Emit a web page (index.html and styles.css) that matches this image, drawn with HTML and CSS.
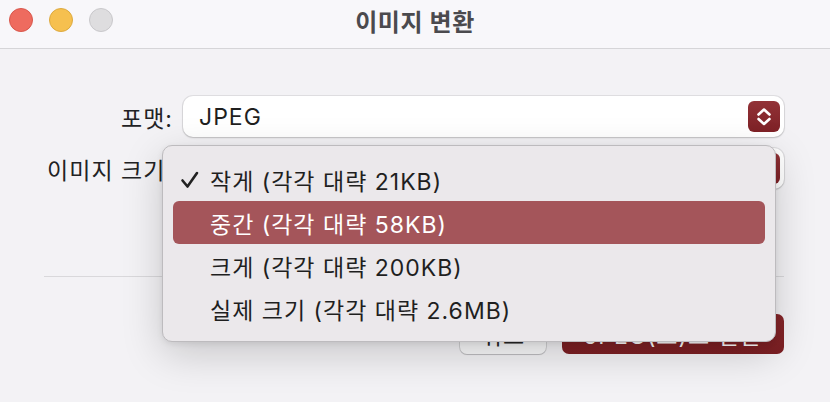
FILE: index.html
```html
<!DOCTYPE html>
<html lang="ko">
<head>
<meta charset="utf-8">
<title>이미지 변환</title>
<link rel="stylesheet" href="styles.css">
</head>
<body>
<div class="window">
  <header class="titlebar">
    <div class="lights">
      <span class="light red"></span>
      <span class="light yellow"></span>
      <span class="light gray"></span>
    </div>
    <h1 class="title">이미지 변환</h1>
  </header>
  <main class="content">
    <div class="form">
      <label class="label">포맷:</label>
      <div class="popup">
        <span class="popup-value">JPEG</span>
        <span class="stepper">
          <svg width="32" height="31" viewBox="0 0 32 31"><path d="M10.5 13.5 L16 8.5 L21.5 13.5" fill="none" stroke="#fff" stroke-width="2.6" stroke-linecap="round" stroke-linejoin="round"/><path d="M10.5 18 L16 23 L21.5 18" fill="none" stroke="#fff" stroke-width="2.6" stroke-linecap="round" stroke-linejoin="round"/></svg>
        </span>
      </div>
      <label class="label">이미지 크기:</label>
      <div class="popup">
        <span class="popup-value covered">중간 (각각 대략 58KB)</span>
        <span class="stepper">
          <svg width="32" height="31" viewBox="0 0 32 31"><path d="M10.5 13.5 L16 8.5 L21.5 13.5" fill="none" stroke="#fff" stroke-width="2.6" stroke-linecap="round" stroke-linejoin="round"/><path d="M10.5 18 L16 23 L21.5 18" fill="none" stroke="#fff" stroke-width="2.6" stroke-linecap="round" stroke-linejoin="round"/></svg>
        </span>
      </div>
    </div>
    <hr class="separator">
    <div class="actions">
      <button class="btn cancel">취소</button>
      <button class="btn primary">JPEG(으)로 변환</button>
    </div>
  </main>
  <ul class="menu">
    <li class="item"><svg class="check" width="20" height="20" viewBox="0 0 20 20"><path d="M2.5 10.5 L7.5 16.5 L17 3" fill="none" stroke="#222" stroke-width="2.6" stroke-linecap="round" stroke-linejoin="round"/></svg>작게 (각각 대략 21KB)</li>
    <li class="item selected">중간 (각각 대략 58KB)</li>
    <li class="item">크게 (각각 대략 200KB)</li>
    <li class="item">실제 크기 (각각 대략 2.6MB)</li>
  </ul>
</div>
</body>
</html>
```

FILE: styles.css
```css
* { box-sizing: border-box; }
html, body {
  margin: 0;
  padding: 0;
  width: 830px;
  height: 402px;
  overflow: hidden;
  background: #f3f2f5;
  font-family: "Inter", "Noto Sans CJK KR", sans-serif;
}
.window {
  position: relative;
  width: 830px;
  height: 402px;
  background: #f3f2f5;
}
.titlebar {
  position: relative;
  height: 49px;
  background: #f8f7fa;
  border-bottom: 1px solid #d6d5d8;
  display: flex;
  align-items: center;
  justify-content: center;
}
.lights {
  position: absolute;
  left: 9px;
  top: 8px;
  display: flex;
  gap: 16px;
}
.light {
  width: 24px;
  height: 24px;
  border-radius: 50%;
  display: block;
}
.light.red { background: #ee6b5f; border: 1px solid #d9574c; }
.light.yellow { background: #f6c04f; border: 1px solid #ddaa3f; }
.light.gray { background: #dedddf; border: 1px solid #c9c8cb; }
.title {
  margin: 0;
  margin-top: -8px;
  font-size: 24px;
  font-weight: 700;
  color: #4b4a4e;
  letter-spacing: 0.6px;
}
.content {
  padding: 47px 46px 0 44px;
}
.form {
  display: grid;
  grid-template-columns: 128px 1fr;
  column-gap: 11px;
  row-gap: 11px;
  align-items: center;
}
.label {
  justify-self: end;
  font-size: 23px;
  letter-spacing: 1px;
  color: #222224;
  white-space: nowrap;
  margin-right: -1px;
}
.popup {
  height: 41px;
  background: #ffffff;
  border-radius: 10px;
  box-shadow: 0 0 0 1px rgba(0,0,0,0.08), 0 1px 2px rgba(0,0,0,0.15);
  display: flex;
  align-items: center;
  justify-content: space-between;
  padding: 0 4px 0 16px;
}
.popup-value {
  font-size: 23px;
  letter-spacing: 1px;
  color: #1f1f1f;
}
.popup-value.covered { visibility: hidden; }
.stepper {
  width: 32px;
  height: 31px;
  border-radius: 6px;
  background: linear-gradient(#923237, #7e2126);
  display: block;
}
.stepper svg { display: block; }
.separator {
  margin: 87px 0 0 0;
  border: 0;
  border-top: 1px solid #d9d8db;
  height: 0;
}
.actions {
  margin-top: 37px;
  display: flex;
  justify-content: flex-end;
  gap: 16px;
}
.btn {
  height: 40px;
  border-radius: 7px;
  font-family: inherit;
  font-size: 23px;
  letter-spacing: 1px;
  border: 0;
  padding: 0;
}
.cancel {
  width: 86px;
  background: #f9f9fa;
  color: #262626;
  box-shadow: 0 0 0 1px rgba(0,0,0,0.12), 0 1px 1px rgba(0,0,0,0.12);
}
.primary {
  width: 222px;
  background: linear-gradient(#86262a, #7c1f23);
  color: #ffffff;
}
.menu {
  position: absolute;
  left: 162px;
  top: 145px;
  width: 614px;
  height: 197px;
  margin: 0;
  padding: 12px 10px 13px 10px;
  list-style: none;
  background: #ebe8eb;
  border: 1px solid #bdbbbe;
  border-radius: 10px;
  box-shadow: 0 12px 40px rgba(0,0,0,0.18), 0 2px 6px rgba(0,0,0,0.08);
}
.item {
  position: relative;
  height: 43px;
  display: flex;
  align-items: center;
  padding-left: 37px;
  font-size: 23px;
  letter-spacing: 1px;
  color: #1f1f1f;
  border-radius: 6px;
}
.item.selected {
  background: #a4555a;
  color: #ffffff;
}
.check {
  position: absolute;
  left: 7px;
  top: 12px;
}
```
